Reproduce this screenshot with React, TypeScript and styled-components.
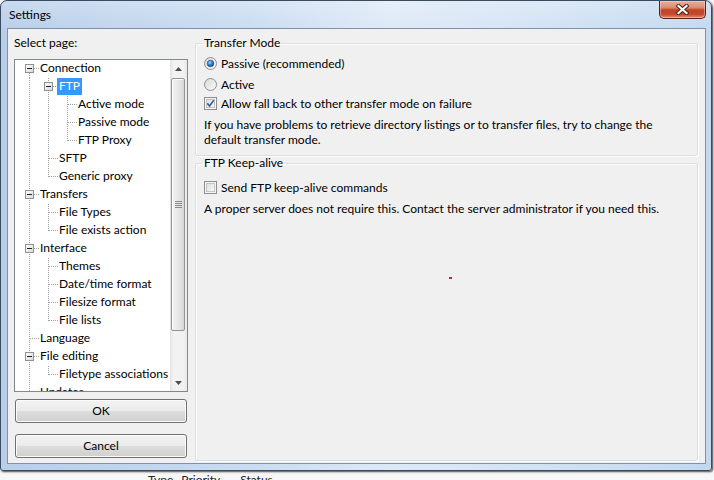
import React from 'react'
import styled, { createGlobalStyle } from 'styled-components'

const GlobalStyle = createGlobalStyle`
  html, body {
    margin: 0;
    padding: 0;
  }
  body {
    font-family: Lato, "Segoe UI", "Liberation Sans", sans-serif;
    font-size: 12px;
    color: #000;
    background: #eef0f2;
  }
`

type PageNode = { label: string; children?: PageNode[]; selected?: boolean }

type Row = {
  label: string
  depth: number
  guides: boolean[]
  first: boolean
  last: boolean
  expander: boolean
  selected?: boolean
}

const pages: PageNode[] = [
  {
    label: 'Connection',
    children: [
      {
        label: 'FTP',
        selected: true,
        children: [{ label: 'Active mode' }, { label: 'Passive mode' }, { label: 'FTP Proxy' }],
      },
      { label: 'SFTP' },
      { label: 'Generic proxy' },
    ],
  },
  { label: 'Transfers', children: [{ label: 'File Types' }, { label: 'File exists action' }] },
  {
    label: 'Interface',
    children: [
      { label: 'Themes' },
      { label: 'Date/time format' },
      { label: 'Filesize format' },
      { label: 'File lists' },
    ],
  },
  { label: 'Language' },
  { label: 'File editing', children: [{ label: 'Filetype associations' }] },
  { label: 'Updates' },
  { label: 'Logging' },
  { label: 'Debug' },
]

const flatten = (nodes: PageNode[], depth: number, guides: boolean[], out: Row[]) => {
  nodes.forEach((n, i) => {
    const last = i === nodes.length - 1
    out.push({
      label: n.label,
      depth,
      guides,
      first: depth === 0 && i === 0,
      last,
      expander: !!n.children,
      selected: n.selected,
    })
    if (n.children) flatten(n.children, depth + 1, [...guides, !last], out)
  })
  return out
}

const rows = flatten(pages, 0, [], [])

const DOT = '#a0a0a0'

// one 19px column of the tree connectors
const Guide = ({ pipe, own, row }: { pipe?: boolean; own?: boolean; row?: Row }) => (
  <svg width="19" height="18" style={{ flex: 'none' }}>
    {pipe && <line x1="8.5" y1="0" x2="8.5" y2="18" stroke={DOT} strokeDasharray="1 1" />}
    {own && row && (
      <>
        <line
          x1="8.5"
          y1={row.first ? 9 : 0}
          x2="8.5"
          y2={row.last ? 9 : 18}
          stroke={DOT}
          strokeDasharray="1 1"
        />
        <line x1={row.expander ? 13 : 9} y1="8.5" x2="19" y2="8.5" stroke={DOT} strokeDasharray="1 1" />
        {row.expander && (
          <>
            <defs>
              <linearGradient id="exp" x1="0" y1="0" x2="1" y2="1">
                <stop offset="0" stopColor="#ffffff" />
                <stop offset="1" stopColor="#d8d8d8" />
              </linearGradient>
            </defs>
            <rect x="4.5" y="4.5" width="8" height="8" fill="url(#exp)" stroke="#919191" />
            <line x1="6" y1="8.5" x2="11" y2="8.5" stroke="#202020" />
          </>
        )}
      </>
    )}
  </svg>
)

const Radio = ({ checked }: { checked?: boolean }) => (
  <svg width="13" height="13" style={{ flex: 'none' }}>
    <defs>
      <linearGradient id="rbg" x1="0" y1="0" x2="1" y2="1">
        <stop offset="0" stopColor="#d8d8d8" />
        <stop offset="1" stopColor="#fbfbfb" />
      </linearGradient>
      <radialGradient id="rdot" cx="0.4" cy="0.35" r="0.7">
        <stop offset="0" stopColor="#a8d8fa" />
        <stop offset="0.5" stopColor="#2f7fd0" />
        <stop offset="1" stopColor="#153e7a" />
      </radialGradient>
    </defs>
    <circle cx="6.5" cy="6.5" r="6" fill="url(#rbg)" stroke="#8e8f8f" />
    {checked && <circle cx="6.5" cy="6.5" r="3.3" fill="url(#rdot)" stroke="#1c4c8c" strokeWidth="0.6" />}
  </svg>
)

const Check = ({ checked }: { checked?: boolean }) => (
  <svg width="13" height="13" style={{ flex: 'none' }}>
    <defs>
      <linearGradient id="cbg" x1="0" y1="0" x2="1" y2="1">
        <stop offset="0" stopColor="#dcdcdc" />
        <stop offset="1" stopColor="#fbfbfb" />
      </linearGradient>
    </defs>
    <rect x="0.5" y="0.5" width="12" height="12" fill="#f4f4f4" stroke="#8e8f8f" />
    <rect x="2.5" y="2.5" width="8" height="8" fill="url(#cbg)" stroke="#c4c4c4" />
    {checked && (
      <path d="M3.3 6.4 L5.6 9 L9.8 3.3" fill="none" stroke="#2f5f9e" strokeWidth="1.6" />
    )}
  </svg>
)

const App = () => (
  <>
    <GlobalStyle />
    <Page>
      <Window>
        <TitleBar>
          <Title>Settings</Title>
          <CloseButton>
            <svg width="13" height="11">
              <path d="M2.5 2 L10.5 9 M10.5 2 L2.5 9" stroke="#4a2018" strokeWidth="4.2" strokeLinecap="square" />
              <path d="M2.5 2 L10.5 9 M10.5 2 L2.5 9" stroke="#ffffff" strokeWidth="2.2" strokeLinecap="square" />
            </svg>
          </CloseButton>
        </TitleBar>
        <Client>
          <LeftColumn>
            <Caption>Select page:</Caption>
            <TreeBox>
              <TreeList>
                {rows.map((r) => (
                  <TreeRow key={r.label}>
                    {r.guides.map((g, i) => (
                      <Guide key={i} pipe={g} />
                    ))}
                    <Guide own row={r} />
                    <TreeLabel $selected={r.selected}>{r.label}</TreeLabel>
                  </TreeRow>
                ))}
              </TreeList>
              <ScrollBar>
                <ScrollArrow>
                  <svg width="7" height="4">
                    <path d="M0 4 L3.5 0 L7 4 Z" fill="#4d4d4d" />
                  </svg>
                </ScrollArrow>
                <Track>
                  <Thumb>
                    <svg width="7" height="8">
                      <path d="M0 0.5 H7 M0 2.5 H7 M0 4.5 H7 M0 6.5 H7" stroke="#8a8a8a" />
                    </svg>
                  </Thumb>
                </Track>
                <ScrollArrow>
                  <svg width="7" height="4">
                    <path d="M0 0 L3.5 4 L7 0 Z" fill="#4d4d4d" />
                  </svg>
                </ScrollArrow>
              </ScrollBar>
            </TreeBox>
            <Button $gap={7}>OK</Button>
            <Button $gap={11}>Cancel</Button>
          </LeftColumn>
          <RightColumn>
            <Group $height={121}>
              <Legend>Transfer Mode</Legend>
              <Option $gap={4}>
                <Radio checked />
                Passive (recommended)
              </Option>
              <Option $gap={5}>
                <Radio />
                Active
              </Option>
              <Option $gap={3}>
                <Check checked />
                Allow fall back to other transfer mode on failure
              </Option>
              <Note $gap={6}>
                If you have problems to retrieve directory listings or to transfer files, try to change the
                <br />
                default transfer mode.
              </Note>
            </Group>
            <Group $grow $pull>
              <Legend>FTP Keep-alive</Legend>
              <Option $gap={8}>
                <Check />
                Send FTP keep-alive commands
              </Option>
              <Note $gap={6}>
                A proper server does not require this. Contact the server administrator if you need this.
              </Note>
              <Speck />
            </Group>
          </RightColumn>
        </Client>
      </Window>
      <BehindStrip>
        <BehindText $gap={148}>Type</BehindText>
        <BehindText $gap={8}>Priority</BehindText>
        <BehindText $gap={20}>Status</BehindText>
      </BehindStrip>
    </Page>
  </>
)

export default App

const Page = styled.div`
  width: 714px;
  height: 480px;
  overflow: hidden;
  display: flex;
  flex-direction: column;
  background: #f3f3f3;
`

const Window = styled.div`
  flex: none;
  width: 712px;
  height: 471px;
  box-sizing: border-box;
  display: flex;
  flex-direction: column;
  padding: 0 5px 6px 6px;
  border: 1px solid #3a4a60;
  border-radius: 7px 7px 3px 3px;
  background:
    linear-gradient(180deg, rgba(255, 255, 255, 0.25), rgba(255, 255, 255, 0) 30px),
    linear-gradient(90deg, #b8cee9 0%, #cadcf1 35%, #dde9f7 55%, #d3e3f4 75%, #c3d8ef 100%);
  box-shadow: 1px 1px 2px rgba(0, 0, 0, 0.7);
  position: relative;
  z-index: 1;
`

const TitleBar = styled.div`
  height: 27px;
  display: flex;
  justify-content: space-between;
  align-items: flex-start;
  padding-left: 2px;
`

const Title = styled.div`
  font-size: 12px;
  line-height: 27px;
  color: #000;
`

const CloseButton = styled.div`
  width: 47px;
  height: 18px;
  box-sizing: border-box;
  display: flex;
  align-items: center;
  justify-content: center;
  border: 1px solid #5a2014;
  border-top: none;
  border-radius: 0 0 5px 5px;
  background: linear-gradient(180deg, #e9b0a0 0%, #d88a72 40%, #c24426 52%, #c4482b 78%, #e0907a 100%);
  box-shadow: inset 0 0 0 1px rgba(255, 220, 210, 0.45);
`

const Client = styled.div`
  flex: 1;
  min-height: 0;
  display: flex;
  gap: 7px;
  padding: 6px 7px 0 6px;
  background: #f0f0f0;
  border: 1px solid #7f92a8;
`

const LeftColumn = styled.div`
  width: 174px;
  flex: none;
  display: flex;
  flex-direction: column;
`

const Caption = styled.div`
  line-height: 16px;
  height: 16px;
  margin-bottom: 8px;
`

const TreeBox = styled.div`
  height: 333px;
  box-sizing: border-box;
  display: flex;
  border: 1px solid #828790;
  background: #fff;
`

const TreeList = styled.div`
  flex: 1;
  overflow: hidden;
  padding-left: 6px;
`

const TreeRow = styled.div`
  display: flex;
  align-items: flex-start;
  height: 18px;
  white-space: nowrap;
`

const TreeLabel = styled.span<{ $selected?: boolean }>`
  margin-left: -2px;
  padding: 0 2px 1px;
  line-height: 16px;
  color: ${({ $selected }) => ($selected ? '#fff' : '#000')};
  background: ${({ $selected }) => ($selected ? '#3399ff' : 'transparent')};
`

const ScrollBar = styled.div`
  width: 17px;
  flex: none;
  display: flex;
  flex-direction: column;
  background: linear-gradient(90deg, #e3e3e3 0%, #f2f2f2 20%, #f2f2f2 80%, #e8e8e8 100%);
`

const ScrollArrow = styled.div`
  height: 17px;
  display: flex;
  align-items: center;
  justify-content: center;
`

const Track = styled.div`
  flex: 1;
  padding: 1px 2px 0 1px;
`

const Thumb = styled.div`
  height: 253px;
  box-sizing: border-box;
  display: flex;
  align-items: center;
  justify-content: center;
  border: 1px solid #959595;
  border-radius: 2px;
  background: linear-gradient(90deg, #f3f3f3 0%, #e9e9e9 50%, #d6d6d6 100%);
  box-shadow: inset 1px 1px 0 #ffffff;
`

const Button = styled.button<{ $gap: number }>`
  width: 172px;
  height: 24px;
  margin: ${({ $gap }) => $gap}px 0 0 1px;
  padding: 0 0 1px;
  border: 1px solid #707070;
  border-radius: 3px;
  font: inherit;
  color: #000;
  background: linear-gradient(180deg, #f2f2f2 0%, #ebebeb 48%, #dddddd 52%, #cfcfcf 100%);
  box-shadow: inset 0 0 0 1px #fbfbfb;
`

const RightColumn = styled.div`
  flex: 1;
  display: flex;
  flex-direction: column;
  padding-bottom: 2px;
`

const Group = styled.fieldset<{ $height?: number; $grow?: boolean; $pull?: boolean }>`
  position: relative;
  margin: ${({ $pull }) => ($pull ? '-1px' : '0')} 0 0 0;
  padding: 0 8px;
  min-width: 0;
  box-sizing: border-box;
  height: ${({ $height }) => ($height ? `${$height}px` : 'auto')};
  flex: ${({ $grow }) => ($grow ? '1' : 'none')};
  border: 1px solid #d5dfe5;
  border-radius: 3px;
  box-shadow: inset 1px 1px 0 #ffffff, 1px 1px 0 #ffffff;
`

const Legend = styled.legend`
  margin-left: -2px;
  padding: 0 2px;
  line-height: 16px;
`

const Option = styled.div<{ $gap: number }>`
  display: flex;
  align-items: center;
  gap: 4px;
  height: 16px;
  margin-top: ${({ $gap }) => $gap}px;
  white-space: nowrap;
`

const Note = styled.div<{ $gap: number }>`
  margin-top: ${({ $gap }) => $gap}px;
  line-height: 15px;
  white-space: nowrap;
`

const Speck = styled.span`
  position: absolute;
  left: 253px;
  top: 106px;
  width: 3px;
  height: 2px;
  background: #d02020;
`

const BehindStrip = styled.div`
  flex: 1;
  display: flex;
  padding-top: 2px;
  background: #f7f7f7;
  overflow: hidden;
`

const BehindText = styled.span<{ $gap: number }>`
  margin-left: ${({ $gap }) => $gap}px;
  line-height: 14px;
  font-size: 12px;
  color: #222;
`
